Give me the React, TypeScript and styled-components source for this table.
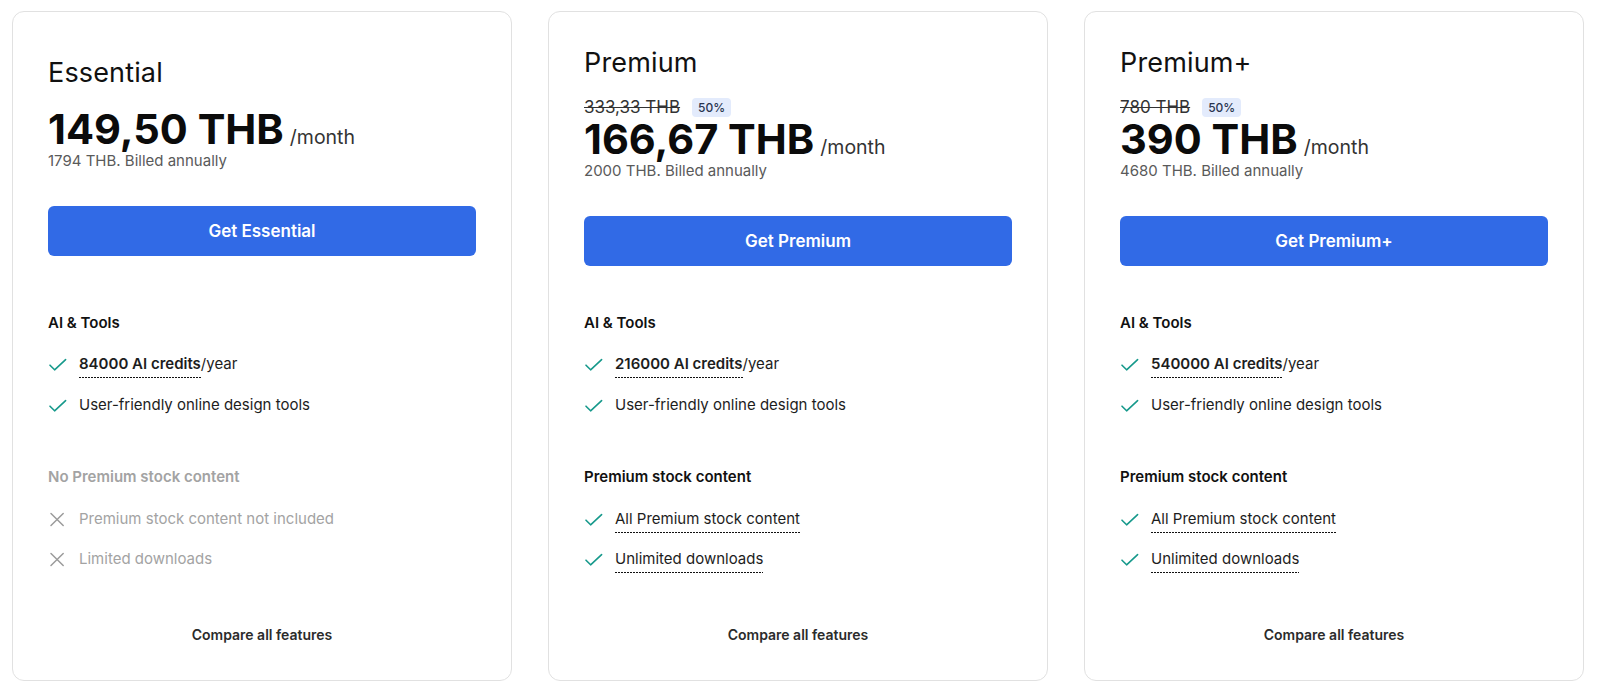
import React from "react";
import styled, { createGlobalStyle } from "styled-components";

const GlobalStyle = createGlobalStyle`
  html, body { margin: 0; padding: 0; background: #ffffff; }
  body { font-family: Inter, "Noto Sans", "Liberation Sans", sans-serif; color: #111; -webkit-font-smoothing: antialiased; }
  * { box-sizing: border-box; }
`;

const Page = styled.div`
  display: flex;
  gap: 36px;
  padding: 11px 16px 0 12px;
`;

const Card = styled.section`
  flex: 1 1 0;
  height: 670px;
  border: 1px solid #e1e1e1;
  border-radius: 12px;
  padding: 35px;
  display: flex;
  flex-direction: column;
  background: #fff;
`;

const Top = styled.div`
  height: 219px;
  flex: none;
  display: flex;
  flex-direction: column;
  justify-content: center;
`;

const Title = styled.h2`
  margin: 0 0 18px;
  font-size: 27px;
  line-height: 32px;
  font-weight: 400;
  letter-spacing: 0.15px;
  color: #111;
`;

const StrikeRow = styled.div`
  display: flex;
  align-items: center;
  gap: 12px;
  height: 20px;
  flex: none;
`;

const OldPrice = styled.span`
  font-size: 17px;
  line-height: 20px;
  color: #333;
  text-decoration: line-through;
`;

const Badge = styled.span`
  display: inline-flex;
  align-items: center;
  justify-content: center;
  height: 19px;
  padding: 0 6px;
  border-radius: 4px;
  background: #e3ebfc;
  color: #2a3550;
  font-size: 12px;
  font-weight: 500;
`;

const PriceRow = styled.div`
  display: flex;
  align-items: baseline;
  height: 44px;
  flex: none;
`;

const Amount = styled.span`
  font-size: 41.5px;
  line-height: 44px;
  font-weight: 700;
  color: #0b0b0b;
`;

const Per = styled.span`
  margin-left: 6px;
  font-size: 19.5px;
  line-height: 20px;
  font-weight: 400;
  color: #333;
`;

const Billed = styled.div`
  font-size: 15px;
  line-height: 20px;
  color: #5a5a5a;
  flex: none;
`;

const CtaButton = styled.button`
  margin-top: 35px;
  height: 50px;
  flex: none;
  width: 100%;
  border: none;
  border-radius: 6px;
  background: #316ae6;
  color: #fff;
  font-family: inherit;
  font-size: 17px;
  font-weight: 600;
  cursor: pointer;
`;

const Features = styled.div`
  margin-top: 47px;
  display: flex;
  flex-direction: column;
  gap: 52px;
`;

const Section = styled.div`
  display: flex;
  flex-direction: column;
  gap: 20.7px;
`;

const SectionTitle = styled.div<{ $muted?: boolean }>`
  margin-bottom: 0.8px;
  font-size: 15px;
  line-height: 20px;
  font-weight: 600;
  color: ${(p) => (p.$muted ? "#a3a3a3" : "#111")};
`;

const Item = styled.div<{ $muted?: boolean }>`
  display: flex;
  align-items: center;
  gap: 11px;
  font-size: 15px;
  line-height: 20px;
  color: ${(p) => (p.$muted ? "#a3a3a3" : "#1d1d1d")};
`;

const IconBox = styled.span`
  width: 20px;
  height: 20px;
  flex: none;
  display: inline-flex;
`;

const Dashed = styled.span<{ $bold?: boolean }>`
  font-weight: ${(p) => (p.$bold ? 600 : 400)};
  padding-bottom: 5px;
  background-image: linear-gradient(to right, #111 0 2px, transparent 2px 3px);
  background-size: 3px 1px;
  background-repeat: repeat-x;
  background-position: 0 100%;
`;

const Compare = styled.div`
  margin-top: auto;
  text-align: center;
  font-size: 14px;
  line-height: 20px;
  font-weight: 600;
  color: #2b2b2b;
`;

const Check = () => (
  <IconBox>
    <svg width="20" height="20" viewBox="0 0 20 20" fill="none">
      <path d="M2 11.2 L6.6 15.8 L17.6 5.6" stroke="#16998b" strokeWidth="1.6" strokeLinecap="round" strokeLinejoin="round" />
    </svg>
  </IconBox>
);

const Cross = () => (
  <IconBox>
    <svg width="20" height="20" viewBox="0 0 20 20" fill="none">
      <path d="M3 4.5 L15.2 16.5 M15.2 4.5 L3 16.5" stroke="#9b9b9b" strokeWidth="1.5" strokeLinecap="round" />
    </svg>
  </IconBox>
);

type Plan = {
  name: string;
  old?: string;
  price: string;
  billed: string;
  credits: string;
  premium: boolean;
};

const plans: Plan[] = [
  { name: "Essential", price: "149,50 THB", billed: "1794 THB. Billed annually", credits: "84000", premium: false },
  { name: "Premium", old: "333,33 THB", price: "166,67 THB", billed: "2000 THB. Billed annually", credits: "216000", premium: true },
  { name: "Premium+", old: "780 THB", price: "390 THB", billed: "4680 THB. Billed annually", credits: "540000", premium: true },
];

export default function App() {
  return (
    <>
      <GlobalStyle />
      <Page>
        {plans.map((p) => (
          <Card key={p.name}>
            <Top>
              <Title>{p.name}</Title>
              {p.old && (
                <StrikeRow>
                  <OldPrice>{p.old}</OldPrice>
                  <Badge>50%</Badge>
                </StrikeRow>
              )}
              <PriceRow>
                <Amount>{p.price}</Amount>
                <Per>/month</Per>
              </PriceRow>
              <Billed>{p.billed}</Billed>
              <CtaButton>Get {p.name}</CtaButton>
            </Top>
            <Features>
              <Section>
                <SectionTitle>AI &amp; Tools</SectionTitle>
                <Item>
                  <Check />
                  <span>
                    <Dashed $bold>{p.credits} AI credits</Dashed>/year
                  </span>
                </Item>
                <Item>
                  <Check />
                  <span>User-friendly online design tools</span>
                </Item>
              </Section>
              {p.premium ? (
                <Section>
                  <SectionTitle>Premium stock content</SectionTitle>
                  <Item>
                    <Check />
                    <span>
                      <Dashed>All Premium stock content</Dashed>
                    </span>
                  </Item>
                  <Item>
                    <Check />
                    <span>
                      <Dashed>Unlimited downloads</Dashed>
                    </span>
                  </Item>
                </Section>
              ) : (
                <Section>
                  <SectionTitle $muted>No Premium stock content</SectionTitle>
                  <Item $muted>
                    <Cross />
                    <span>Premium stock content not included</span>
                  </Item>
                  <Item $muted>
                    <Cross />
                    <span>Limited downloads</span>
                  </Item>
                </Section>
              )}
            </Features>
            <Compare>Compare all features</Compare>
          </Card>
        ))}
      </Page>
    </>
  );
}
